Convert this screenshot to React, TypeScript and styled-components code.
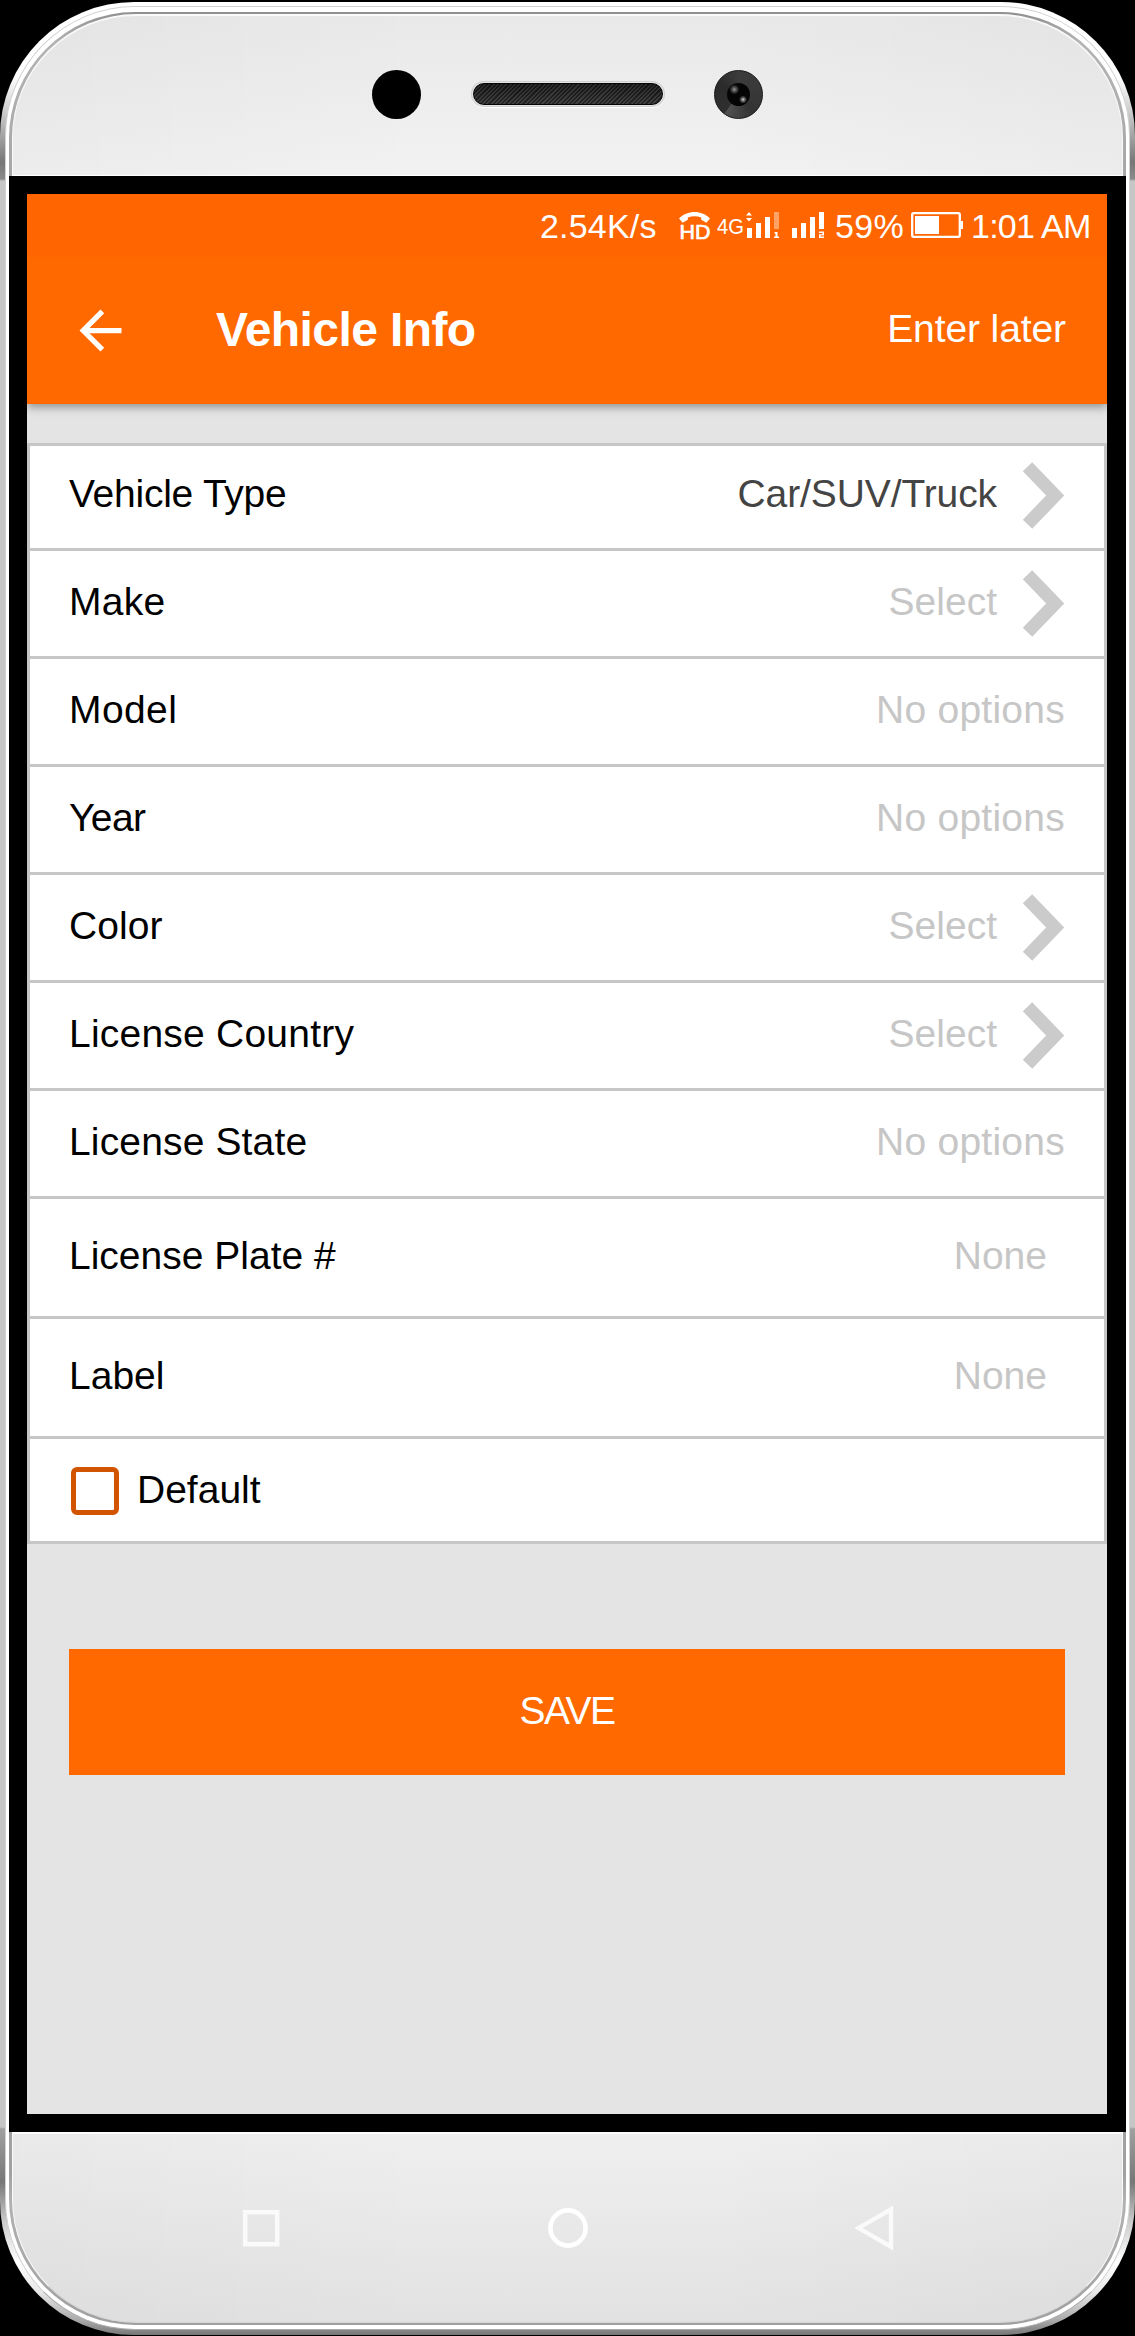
import React from "react";
import styled, { createGlobalStyle } from "styled-components";

const GlobalStyle = createGlobalStyle`
  *, *::before, *::after { box-sizing: border-box; }
  html, body { margin: 0; padding: 0; background: #000; }
  body { font-family: "Liberation Sans", Arial, Helvetica, sans-serif; }
`;

const Stage = styled.div`
  width: 1135px;
  height: 2336px;
  padding: 2px 0 1px;
  background: #000;
  overflow: hidden;
`;

/* Phone shell: nested rims, from the outer metal edge to the front face */
const Shell = styled.div`
  width: 1135px;
  height: 2333px;
  padding: 4px 5px 5px;
  border-radius: 134px;
  background: linear-gradient(
    180deg,
    #fff 0,
    #fff 75px,
    #ccc 110px,
    #777 160px,
    #8a8a8a 177px,
    #c6c6c6 179px,
    #c6c6c6 2125px,
    #a0a0a0 2127px,
    #777 2180px,
    #ccc 2220px,
    #fff 2260px,
    #e8e8e8 2290px,
    #aaa 2318px,
    #777 2333px
  );
`;

const Rim = styled.div`
  height: 100%;
  padding: 5px 3px 4px;
  border: 1px solid #d2d2d2;
  border-bottom-color: #aaa;
  border-radius: 130px;
  background: #fff;
`;

const Groove = styled.div`
  height: 100%;
  padding: 2px 3px;
  border-radius: 126px;
  background: linear-gradient(180deg, #8f8f8f 0, #b4b4b4 30px, #a6a6a6 170px, #a0a0a0 2160px, #b2b2b2 2190px, #a0a0a0 100%);
`;

const Face = styled.div`
  height: 100%;
  display: flex;
  flex-direction: column;
  border-radius: 124px;
  border: 1px solid #fafafa;
  border-top-width: 2px;
  border-bottom-color: #d6d6d6;
  background:
    linear-gradient(90deg, rgba(0, 0, 0, 0.025), rgba(0, 0, 0, 0) 38%, rgba(0, 0, 0, 0) 62%, rgba(0, 0, 0, 0.025)),
    linear-gradient(180deg, #e9e9e9 0, #f2f2f2 160px, #efefef 2116px, #e2e2e2 100%);
`;

const TopBezel = styled.div`
  flex: none;
  height: 160px;
  padding: 54px 359px 0 359px;
  display: flex;
  justify-content: space-between;
  align-items: flex-start;
  border-bottom: 1px solid #fff;
`;

const Sensor = styled.div`
  width: 49px;
  height: 49px;
  border-radius: 50%;
  background: #000;
`;

const Speaker = styled.div`
  width: 190px;
  height: 22px;
  margin-top: 13px;
  border: 1.5px solid #050505;
  border-radius: 11px;
  background:
    repeating-linear-gradient(135deg, rgba(0, 0, 0, 0.35) 0 1.5px, rgba(120, 120, 120, 0.15) 1.5px 3px),
    linear-gradient(180deg, #1c1c1c, #3a3a3a);
  box-shadow: 0 0 0 1px #e4e4e4, 0 0 0 2px #cfcfcf, 0 2px 1px 1px #fff;
`;

const Camera = styled.div`
  width: 49px;
  height: 49px;
  display: flex;
  align-items: center;
  justify-content: center;
  border: 1px solid #161616;
  border-radius: 50%;
  background: conic-gradient(#3c3c3c 0deg, #383838 90deg, #333 140deg, #505050 215deg, #2f2f2f 218deg, #2b2b2b 300deg, #3c3c3c 360deg);
`;

const Lens = styled.div`
  width: 23px;
  height: 23px;
  border-radius: 50%;
  background:
    radial-gradient(circle at 32% 28%, #9a9a9a 0, #555 2px, transparent 5px),
    radial-gradient(circle at 70% 72%, #ddd 0, #777 1.5px, transparent 4px),
    #050505;
`;

const Display = styled.div`
  flex: none;
  height: 1956px;
  margin: 0 -4px;
  padding: 18px;
  background: #000;
`;

const Screen = styled.div`
  width: 1080px;
  height: 1920px;
  background: #e4e4e4;
`;

const StatusBar = styled.div`
  height: 63px;
  display: flex;
  align-items: flex-start;
  padding: 15px 0 0 513px;
  background: #ff6500;
  color: #fff;
`;

const StatusText = styled.span<{ $w: number; $before?: number; $gap?: number; $ls?: number }>`
  flex: none;
  width: ${(p) => p.$w}px;
  margin: -2px ${(p) => p.$gap ?? 0}px 0 ${(p) => p.$before ?? 0}px;
  font-size: 34px;
  line-height: 38px;
  letter-spacing: ${(p) => p.$ls ?? 0}px;
  white-space: nowrap;
`;

const StatusIcons = styled.svg`
  flex: none;
  display: block;
  overflow: visible;
`;

const AppBar = styled.header`
  position: relative;
  height: 147px;
  display: flex;
  align-items: center;
  padding: 0 41px 0 42px;
  background: #ff6900;
  color: #fff;
  box-shadow: 0 3px 9px rgba(0, 0, 0, 0.38);
  clip-path: inset(0 0 -14px 0);
`;

const Title = styled.h1`
  margin: 0 auto 1px 84px;
  font-size: 48px;
  line-height: 56px;
  font-weight: 700;
  letter-spacing: -0.6px;
`;

const BarAction = styled.button`
  margin: 0 0 4px;
  padding: 0;
  border: 0;
  background: none;
  color: #fff;
  font: 39px/46px "Liberation Sans", Arial, sans-serif;
  letter-spacing: -0.1px;
`;

const List = styled.div`
  margin-top: 39px;
  border: 3px solid #c6c6c6;
  border-top: 0;
  background: #fff;
  box-shadow: inset 0 3px 0 #c6c6c6;
`;

const Row = styled.div<{ $tall?: boolean }>`
  height: ${(p) => (p.$tall ? 120 : 108)}px;
  display: flex;
  align-items: center;
  padding: 0 39px;
  border-bottom: 3px solid #c6c6c6;
`;

const CheckRow = styled.label`
  height: 102px;
  display: flex;
  align-items: center;
  padding: 2px 41px 0;
`;

const Text = styled.span<{ $ls?: number }>`
  padding-bottom: 4px;
  font-size: 39px;
  line-height: 46px;
  letter-spacing: ${(p) => p.$ls ?? 0}px;
  color: #000;
`;

const CheckText = styled(Text)`
  padding-bottom: 3px;
`;

const Value = styled(Text)<{ $filled?: boolean; $indent?: boolean }>`
  margin-left: auto;
  margin-right: ${(p) => (p.$indent ? 18 : 0)}px;
  color: ${(p) => (p.$filled ? "#444" : "#c6c6c6")};
`;

const Chevron = styled.svg`
  flex: none;
  display: block;
  margin-left: 25px;
`;

const CheckBox = styled.span`
  width: 48px;
  height: 48px;
  margin-right: 18px;
  border: 5.5px solid #d35400;
  border-radius: 6px;
`;

const SaveButton = styled.button`
  display: block;
  width: 996px;
  height: 126px;
  margin: 105px 42px 0;
  padding: 0 0 3px;
  border: 0;
  background: #ff6900;
  color: #fff;
  font: 39px/46px "Liberation Sans", Arial, sans-serif;
  letter-spacing: -1.5px;
`;

const BottomBezel = styled.div`
  flex: 1;
  display: flex;
  justify-content: space-between;
  align-items: flex-start;
  padding: 71px 228px 0 229px;
  border-top: 2px solid #fcfcfc;
`;

const NavIcon = styled.svg`
  display: block;
`;

type Field = {
  label: string;
  value: string;
  spacing?: number;
  valueSpacing?: number;
  link?: boolean;
  filled?: boolean;
  tall?: boolean;
};

const fields: Field[] = [
  { label: "Vehicle Type", value: "Car/SUV/Truck", spacing: -0.25, valueSpacing: -0.1, link: true, filled: true },
  { label: "Make", value: "Select", spacing: 0.3, link: true },
  { label: "Model", value: "No options", spacing: 0.4, valueSpacing: 0.25 },
  { label: "Year", value: "No options", spacing: -0.6, valueSpacing: 0.25 },
  { label: "Color", value: "Select", spacing: 0.1, link: true },
  { label: "License Country", value: "Select", spacing: 0.22, link: true },
  { label: "License State", value: "No options", spacing: 0.15, valueSpacing: 0.25 },
  { label: "License Plate #", value: "None", tall: true },
  { label: "Label", value: "None", tall: true },
];

function Signals() {
  return (
    <StatusIcons width="156" height="40" viewBox="0 0 156 40" fill="#fff">
      <path d="M1 9.5C9 .8 24 .8 32 9.5l-3.600 4.200-5.200-2.900V8.400c-4-1.500-9.400-1.500-13.400 0v2.400l-5.200 2.900z" />
      <text x="1.5" y="30" fontSize="20" fontWeight="400" stroke="#fff" strokeWidth=".7" textLength="31" lengthAdjust="spacingAndGlyphs">HD</text>
      <text x="39" y="24.5" fontSize="21.5" textLength="27" lengthAdjust="spacingAndGlyphs">4G</text>
      <path d="M68 6.500l3-3.500 3 3.500zM68 9l3 3.500L74 9z" />
      <path d="M69 19h5v10h-5zM78 14h5v15h-5zM87 8h5v21h-5z" />
      <path d="M96 3h5v17h-5z" opacity=".4" />
      <path d="M96.500 23h3v4.500h1.500V29h-5v-1.500h1.500v-3h-1z" />
      <path d="M114 19h5v10h-5zM123 14h5v15h-5zM132 8h5v21h-5zM141 3h5v17h-5z" />
      <path d="M141 22.500h5v4h-3.500v1h3.500V29h-5v-3.800h3.500V24H141z" />
    </StatusIcons>
  );
}

function Battery() {
  return (
    <StatusIcons width="62" height="32" viewBox="0 0 62 32">
      <rect x="9.200" y="4.200" width="47.600" height="23.600" rx="1.500" fill="none" stroke="#fff" strokeWidth="2.300" />
      <path d="M12 7h24v18H12zM57 12h3v8h-3z" fill="#fff" />
    </StatusIcons>
  );
}

export default function App() {
  return (
    <Stage>
      <GlobalStyle />
      <Shell>
        <Rim>
          <Groove>
            <Face>
              <TopBezel>
                <Sensor />
                <Speaker />
                <Camera>
                  <Lens />
                </Camera>
              </TopBezel>
              <Display>
                <Screen>
                  <StatusBar>
                    <StatusText $w={117} $gap={21} $ls={0.2}>2.54K/s</StatusText>
                    <Signals />
                    <StatusText $w={68} $before={1} $ls={0.4}>59%</StatusText>
                    <Battery />
                    <StatusText $w={122} $before={6} $ls={-0.75}>1:01 AM</StatusText>
                  </StatusBar>
                  <AppBar>
                    <svg width="63" height="63" viewBox="0 0 24 24" fill="#fff">
                      <path d="M20 11H7.830l5.590-5.590L12 4l-8 8 8 8 1.410-1.410L7.830 13H20v-2z" />
                    </svg>
                    <Title>Vehicle Info</Title>
                    <BarAction>Enter later</BarAction>
                  </AppBar>
                  <List>
                    {fields.map((f) => (
                      <Row key={f.label} $tall={f.tall}>
                        <Text $ls={f.spacing}>{f.label}</Text>
                        <Value $ls={f.valueSpacing} $filled={f.filled} $indent={f.tall}>{f.value}</Value>
                        {f.link && (
                          <Chevron width="43" height="67" viewBox="0 0 43 67">
                            <path d="M5.500 4.800L33.200 33.500 5.500 62.200" fill="none" stroke="#cbcbcb" strokeWidth="13" />
                          </Chevron>
                        )}
                      </Row>
                    ))}
                    <CheckRow>
                      <CheckBox />
                      <CheckText>Default</CheckText>
                    </CheckRow>
                  </List>
                  <SaveButton>SAVE</SaveButton>
                </Screen>
              </Display>
              <BottomBezel>
                <NavIcon width="39" height="46" viewBox="0 0 39 46">
                  <rect x="3.200" y="7.200" width="32" height="32" fill="none" stroke="#fafafa" strokeWidth="4.500" />
                </NavIcon>
                <NavIcon width="40" height="46" viewBox="0 0 40 46">
                  <circle cx="20" cy="23" r="17.600" fill="none" stroke="#fff" strokeWidth="4.600" />
                </NavIcon>
                <NavIcon width="40" height="46" viewBox="0 0 40 46">
                  <path d="M4.500 23L37 4.300v37.400z" fill="none" stroke="#fafafa" strokeWidth="4.300" />
                </NavIcon>
              </BottomBezel>
            </Face>
          </Groove>
        </Rim>
      </Shell>
    </Stage>
  );
}
